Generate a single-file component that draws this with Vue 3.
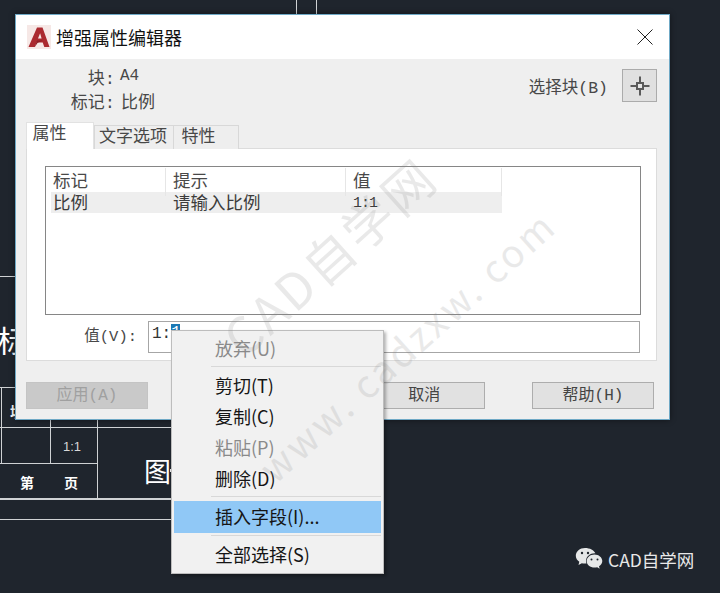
<script setup>
const rows = [{ tag: '比例', prompt: '请输入比例', value: '1:1' }]
const buttons = [
  { id: 'apply', label: '应用(A)', disabled: true },
  { id: 'ok', label: '', disabled: false },
  { id: 'cancel', label: '取消', disabled: false },
  { id: 'help', label: '帮助(H)', disabled: false }
]
const menu = [
  { label: '放弃(U)', disabled: true },
  { sep: true },
  { label: '剪切(T)' },
  { label: '复制(C)' },
  { label: '粘贴(P)', disabled: true },
  { label: '删除(D)' },
  { sep: true },
  { label: '插入字段(I)...', active: true },
  { sep: true },
  { label: '全部选择(S)' }
]
</script>

<template>
  <div class="stage">
    <svg class="drawing" width="720" height="593" viewBox="0 0 720 593">
      <g stroke="#cfd2d4" stroke-width="1" fill="none">
        <path d="M296.5 0V14M316.5 0V14" />
        <path d="M0 276.5H16M0 387.5H16M0 427.5H172M1.5 387V463M0 463.5H97M50.5 420V463M97.5 420V499M0 519.5H172" />
        <path d="M0 499H172" stroke-width="2" />
      </g>
      <text class="cad big" x="-3" y="352">标</text>
      <text class="cad fig" x="144" y="482">图</text>
      <rect x="170" y="469" width="2" height="3" fill="#e8e8e8" />
      <text class="cad small" x="10" y="417">填</text>
      <text class="cad tiny" x="63" y="451">1:1</text>
      <text class="cad small" x="20" y="488">第</text>
      <text class="cad small" x="64" y="488">页</text>
    </svg>

    <section class="dialog">
      <header class="titlebar">
        <svg class="logo" width="24" height="24" viewBox="0 0 24 24">
          <rect width="24" height="24" fill="#f6e8e6" />
          <path d="M1.5 22 10 2.500h5.500L22.500 22h-5.200l-1.600-4.600H9.600L7.800 22z" fill="#ab2a30" />
          <path d="M11 13.500h3.600l-1.500-5.200z" fill="#f6e8e6" />
          <path d="M7.800 22 10 15.500h5.700l-5 2.300z" fill="#8c1f25" />
        </svg>
        <span class="title">增强属性编辑器</span>
        <svg class="close" width="16" height="16" viewBox="0 0 16 16">
          <path d="M.5.500 15.500 15.500M15.500.500.500 15.500" stroke="#222" stroke-width="1" fill="none" />
        </svg>
      </header>

      <div class="body">
        <div class="top">
          <dl class="info">
            <dt>块:</dt><dd class="code">A4</dd>
            <dt>标记:</dt><dd>比例</dd>
          </dl>
          <div class="picker">
            <span>选择块(B)</span>
            <button class="pick" type="button">
              <svg width="22" height="22" viewBox="0 0 22 22">
                <path d="M11 1.500V7.500M11 14.500v6M1.500 11H7.500M14.500 11h6" stroke="#5a5a5a" stroke-width="2" fill="none" />
                <rect x="8" y="8" width="6" height="6" fill="#e6e6e6" stroke="#5a5a5a" stroke-width="2" />
              </svg>
            </button>
          </div>
        </div>

        <div class="tabs">
          <span class="tab on">属性</span>
          <span class="tab mid">文字选项</span>
          <span class="tab last">特性</span>
        </div>

        <div class="pane">
          <div class="list">
            <div class="row head">
              <span>标记</span><span>提示</span><span>值</span>
            </div>
            <div v-for="r in rows" :key="r.tag" class="row sel">
              <span>{{ r.tag }}</span><span>{{ r.prompt }}</span><span class="code">{{ r.value }}</span>
            </div>
          </div>
          <div class="valuerow">
            <label>值(V):</label>
            <div class="input">1:<mark>1</mark></div>
          </div>
        </div>

        <div class="actions">
          <button v-for="b in buttons" :key="b.id" type="button" class="btn" :class="{ off: b.disabled }">{{ b.label }}</button>
        </div>
      </div>
    </section>

    <ul class="menu">
      <template v-for="(m, i) in menu" :key="i">
        <li v-if="m.sep" class="sep"></li>
        <li v-else class="item" :class="{ off: m.disabled, active: m.active }">{{ m.label }}</li>
      </template>
    </ul>

    <div class="mark mark-a">CAD自学网</div>
    <div class="mark mark-b">www. cadzxw. com</div>

    <div class="brand">
      <svg width="28" height="26" viewBox="0 0 28 26">
        <path d="M10 1C4.800 1 .8 4.500 .8 8.800c0 2.500 1.400 4.600 3.500 6L3.500 18l3.300-1.800c1 .3 2 .4 3.200.4.500 0 1 0 1.500-.1-.3-.9-.4-1.700-.4-2.600 0-4.400 4-7.600 8.600-7.600h.7C19 3.200 14.900 1 10 1z" fill="#e6e8e8" />
        <path d="M27.300 14c0-3.800-3.700-6.600-7.800-6.600-4.400 0-7.800 2.900-7.800 6.600 0 3.800 3.400 6.600 7.800 6.600.9 0 1.800-.1 2.700-.4l2.500 1.500-.7-2.500c2-1.300 3.300-3.100 3.300-5.200z" fill="#e6e8e8" />
        <circle cx="7" cy="6" r="1.200" fill="#1f252d" />
        <circle cx="13" cy="6" r="1.200" fill="#1f252d" />
        <circle cx="16.500" cy="12.500" r="1" fill="#1f252d" />
        <circle cx="22.500" cy="12.500" r="1" fill="#1f252d" />
      </svg>
      <span>CAD自学网</span>
    </div>
  </div>
</template>

<style scoped>
.stage {
  position: relative;
  width: 720px;
  height: 593px;
  overflow: hidden;
  background: #1f252d;
  font-family: "Liberation Mono", "Noto Sans CJK SC", monospace;
}
.drawing {
  position: absolute;
  left: 0;
  top: 0;
}
.cad {
  font-family: "Noto Sans CJK SC", sans-serif;
  fill: #fff;
}
.big { font-size: 30px; }
.fig { font-size: 27px; }
.small { font-size: 14px; font-weight: 700; }
.tiny { font-size: 13px; fill: #d8d8d8; font-family: "Liberation Sans", sans-serif; }

.dialog {
  position: absolute;
  left: 15px;
  top: 14px;
  width: 655px;
  height: 406px;
  box-sizing: border-box;
  border: 1px solid #6fa9c6;
  background: #efefef;
  box-shadow: 0 0 6px rgba(0, 0, 0, .45);
  display: flex;
  flex-direction: column;
  color: #484848;
  font-size: 17px;
}
.titlebar {
  height: 44px;
  flex: none;
  background: #fff;
  display: flex;
  align-items: center;
  padding: 0 16px 0 11px;
}
.logo { flex: none; }
.title {
  margin-left: 5px;
  font: 18px/1 "Noto Sans CJK SC", sans-serif;
  color: #111;
}
.close { margin-left: auto; }
.body {
  flex: 1;
  padding: 10px 12px 0 10px;
}
.top {
  height: 53px;
  display: flex;
  justify-content: space-between;
}
.info {
  margin: -5px 0 0;
  width: 200px;
  height: 48px;
  display: grid;
  grid-template-columns: 89px 1fr;
  grid-auto-rows: 24px;
  align-items: center;
  column-gap: 6px;
}
.info dt { text-align: right; }
.info dd { margin: 0; }
.info .code { font-size: 16px; margin-left: -1px; line-height: 26px; }
.picker {
  display: flex;
  align-items: flex-start;
  gap: 14px;
}
.picker span { margin-top: 5px; font-size: 16.500px; }
.pick {
  width: 35px;
  height: 33px;
  box-sizing: border-box;
  padding: 0;
  border: 1px solid #ababab;
  background: #e0e0e0;
  display: flex;
  align-items: center;
  justify-content: center;
}
.tabs {
  height: 27px;
  display: flex;
  align-items: flex-end;
  position: relative;
  z-index: 1;
}
.tab {
  box-sizing: border-box;
  border: 1px solid #d8d8d8;
  border-bottom: 0;
  text-align: center;
  background: #eeeeee;
  height: 24px;
  line-height: 23px;
}
.tab.on {
  width: 68px;
  height: 27px;
  background: #fff;
  line-height: 23px;
  border-color: #e2e2e2;
  padding-right: 21px;
}
.tab.mid { width: 80px; padding-right: 2px; }
.tab.last { width: 66px; margin-left: -1px; padding-right: 15px; }
.pane {
  box-sizing: border-box;
  height: 213px;
  margin-top: -1px;
  background: #fff;
  border: 1px solid #dcdcdc;
  padding: 17px 15px 0 18px;
}
.list {
  box-sizing: border-box;
  height: 149px;
  border: 1px solid #868686;
  padding-top: 1px;
  font-size: 17.500px;
}
.row {
  width: 456px;
  display: grid;
  grid-template-columns: 120px 180px 156px;
  line-height: 28px;
  height: 24px;
}
.row span { padding-left: 7px; }
.head span {
  border-right: 1px solid #e6e6e6;
}
.sel {
  margin-left: 5px;
  width: 451px;
  height: 21px;
  line-height: 24px;
  background: #eeeeee;
  grid-template-columns: 115px 180px 156px;
  color: #3c3c3c;
}
.sel span:first-child { padding-left: 2px; }
.sel .code { font-size: 15px; letter-spacing: -1px; }
.valuerow {
  margin-top: 6px;
  display: flex;
  align-items: center;
  height: 32px;
}
.valuerow label {
  width: 92px;
  text-align: right;
  margin-right: 11px;
  flex: none;
  font-size: 15.500px;
  line-height: 30px;
}
.input {
  box-sizing: border-box;
  width: 492px;
  height: 32px;
  border: 1px solid #a6a6a6;
  padding: 2px 0 0 3px;
  line-height: 20px;
  font-size: 16px;
  color: #333;
}
.input mark {
  display: inline-block;
  vertical-align: top;
  width: 9px;
  height: 18px;
  margin-top: 0;
  line-height: 18px;
  background: #1a78b4;
  color: #fff;
}
.actions {
  margin: 21px 3px 0 0;
  display: flex;
  justify-content: space-between;
}
.btn {
  box-sizing: border-box;
  width: 122px;
  height: 27px;
  padding: 0;
  border: 1px solid #adadad;
  background: #e1e1e1;
  color: #444;
  font: 16px/1 "Liberation Mono", "Noto Sans CJK SC", monospace;
}
.btn.off {
  background: #c9c9c9;
  border-color: #c4c4c4;
  color: #a0a0a0;
}

.menu {
  position: absolute;
  left: 171px;
  top: 330px;
  width: 213px;
  height: 244px;
  box-sizing: border-box;
  margin: 0;
  padding: 2px 2px 0;
  list-style: none;
  background: #f1f1f1;
  border: 1px solid #bdbdbd;
  box-shadow: 2px 2px 3px rgba(0, 0, 0, .3);
  font: 18px/31px "Noto Sans CJK SC", sans-serif;
  color: #151515;
}
.item {
  height: 31px;
  padding-left: 41px;
}
.item.off { color: #8a8a8a; }
.item.active {
  margin-top: 1px;
  height: 32px;
  line-height: 31px;
  background: #90c8f6;
}
.sep {
  height: 6px;
  position: relative;
}
.sep::after {
  content: "";
  position: absolute;
  left: 37px;
  right: 0;
  top: 2px;
  height: 1px;
  background: #d8d8d8;
}

.mark {
  position: absolute;
  white-space: nowrap;
  color: #8a8a8a;
  opacity: .18;
  transform: translate(-50%, -50%) rotate(-42deg);
  font-family: "Noto Sans CJK SC", sans-serif;
  pointer-events: none;
}
.mark-a {
  left: 328px;
  top: 255px;
  font-size: 50px;
  letter-spacing: 3px;
}
.mark-b {
  left: 406px;
  top: 345px;
  font-size: 38px;
  letter-spacing: 3px;
}

.brand {
  position: absolute;
  left: 575px;
  top: 547px;
  display: flex;
  align-items: center;
  gap: 5px;
  color: #e8e8e8;
  font: 17.500px/1 "Noto Sans CJK SC", sans-serif;
}
</style>
<style>
html, body { background: #1f252d; }
</style>
